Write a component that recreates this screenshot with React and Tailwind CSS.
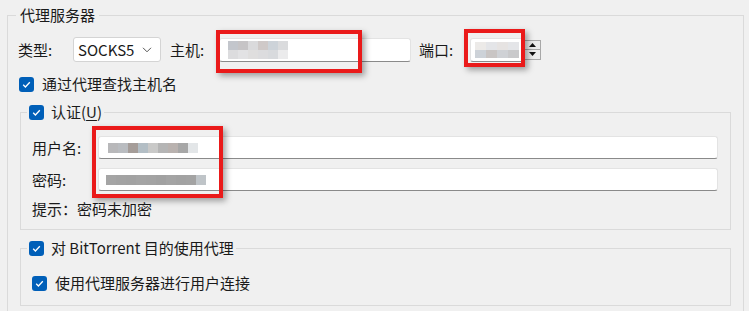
import React from 'react';

// pixelated "redacted" blocks
function Pixels({ rows, cell = 10, h = 9 }) {
  return (
    <div className="flex flex-col">
      {rows.map((row, i) => (
        <div key={i} className="flex">
          {row.map((c, j) => (
            <div key={j} style={{ background: c, width: cell, height: h }} />
          ))}
        </div>
      ))}
    </div>
  );
}

function CheckBox() {
  return (
    <span className="flex h-[15px] w-[15px] shrink-0 items-center justify-center rounded-[3px] bg-[#005fb8]">
      <svg width="11" height="11" viewBox="0 0 11 11">
        <polyline points="2.2,5.8 4.4,8 8.8,3.2" fill="none" stroke="white" strokeWidth="1.3" />
      </svg>
    </span>
  );
}

function TextBox({ className = '', children }) {
  return (
    <div
      className={`flex items-center rounded-[3px] border border-[#e3e3e3] border-b-[#8a8a8a] bg-white ${className}`}
    >
      {children}
    </div>
  );
}

function RedBox({ className }) {
  return (
    <div
      className={`pointer-events-none absolute border-4 border-[#ea1a1a] shadow-[3px_3px_6px_rgba(0,0,0,0.35)] ${className}`}
    />
  );
}

export default function App() {
  return (
    <div className="relative h-[311px] w-[749px] overflow-hidden bg-[#f0f0f0] pl-[7px] font-['Noto_Sans_CJK_SC','Noto_Sans',sans-serif] text-[15px] text-[#1a1a1a]">
      <fieldset className="mt-[5px] w-[737px] border border-[#dadada] px-[8px] pb-[20px]">
        <legend className="px-[4px] leading-[20px]">代理服务器</legend>

        {/* 类型 / 主机 / 端口 */}
        <div className="mt-[12px] flex h-[25px] items-center pl-[2px]">
          <span className="w-[55px] leading-[20px]">类型:</span>
          <div className="flex h-[25px] w-[88px] items-center justify-between rounded-[3px] border border-[#d4d4d4] bg-white pl-[4px] pr-[8px]">
            <span className="leading-[20px]">SOCKS5</span>
            <svg width="10" height="6" viewBox="0 0 10 6">
              <polyline points="1,0.8 5,4.8 9,0.8" fill="none" stroke="#555" strokeWidth="1" />
            </svg>
          </div>
          <span className="ml-[9px] w-[49px] leading-[20px]">主机:</span>
          <TextBox className="h-[24px] w-[192px] pl-[8px]">
            <Pixels
              h={9}
              rows={[
                ['#c3c6cc', '#c6c4c6', '#dadadc', '#cfc9c8', '#cdd3d9', '#dadbdd'],
                ['#dcdcde', '#e2e2e4', '#dfdede', '#dcdcde', '#d8dadd', '#ebebec'],
              ]}
            />
          </TextBox>
          <span className="ml-[8px] w-[51px] leading-[20px]">端口:</span>
          <TextBox className="h-[24px] w-[54px] pl-[4px]">
            <Pixels
              cell={11}
              h={8}
              rows={[
                ['#eceae8', '#e4e5e8', '#e6e3e2', '#e4e5e8'],
                ['#cdd2d8', '#c9c5c4', '#cfd1d5', '#c9c9cb'],
              ]}
            />
          </TextBox>
          <div className="flex h-[20px] w-[17px] flex-col border border-[#a8a8a8] bg-[#ececec]">
            <div className="flex flex-1 items-center justify-center border-b border-[#a8a8a8]">
              <svg width="7" height="4" viewBox="0 0 7 4"><polygon points="0,4 3.5,0 7,4" fill="#111" /></svg>
            </div>
            <div className="flex flex-1 items-center justify-center">
              <svg width="7" height="4" viewBox="0 0 7 4"><polygon points="0,0 3.5,4 7,0" fill="#111" /></svg>
            </div>
          </div>
        </div>

        {/* 通过代理查找主机名 */}
        <div className="mt-[12px] flex h-[20px] items-center gap-[8px] pl-[3px]">
          <CheckBox />
          <span className="leading-[20px]">通过代理查找主机名</span>
        </div>

        {/* 认证 */}
        <fieldset className="mx-[4px] mt-[8px] border border-[#dadada] pb-[10px] pl-[11px] pr-[12px]">
          <legend className="ml-[-5px] flex items-center gap-[7px] px-[2px] leading-[20px]">
            <CheckBox />
            <span>
              认证(<span className="underline underline-offset-2">U</span>)
            </span>
          </legend>
          <div className="mt-[14px] flex h-[23px] items-center">
            <span className="w-[66px] leading-[20px]">用户名:</span>
            <TextBox className="h-[23px] flex-1 pl-[9px]">
              <Pixels
                h={10}
                rows={[
                  ['#b8b8ba', '#b9bcc0', '#a59d99', '#b3bec5', '#c9c9c8', '#b5b5b5', '#b9b2af', '#a7a7a7', '#e3e6e8'],
                ]}
              />
            </TextBox>
          </div>
          <div className="mt-[9px] flex h-[23px] items-center">
            <span className="w-[66px] leading-[20px]">密码:</span>
            <TextBox className="h-[23px] flex-1 pl-[7px]">
              <Pixels
                h={10}
                rows={[
                  ['#a5a5a5', '#a3a3a3', '#a2a2a2', '#a4a4a4', '#a3a3a3', '#a1a1a1', '#a4a4a4', '#a2a2a2', '#a3a3a3', '#bfc4c8'],
                ]}
              />
            </TextBox>
          </div>
          <div className="mt-[8px] leading-[20px]">提示：密码未加密</div>
        </fieldset>

        {/* BitTorrent */}
        <fieldset className="mx-[4px] mt-[8px] border border-[#dadada] pb-[12px] pl-[11px] pr-[12px]">
          <legend className="ml-[-5px] flex items-center gap-[7px] px-[2px] leading-[20px]">
            <CheckBox />
            <span>对 BitTorrent 目的使用代理</span>
          </legend>
          <div className="mt-[15px] flex h-[20px] items-center gap-[8px]">
            <CheckBox />
            <span className="leading-[20px]">使用代理服务器进行用户连接</span>
          </div>
        </fieldset>
      </fieldset>

      <RedBox className="left-[216px] top-[30px] h-[43px] w-[146px]" />
      <RedBox className="left-[464px] top-[29px] h-[38px] w-[61px]" />
      <RedBox className="left-[92px] top-[126px] h-[72px] w-[131px]" />
    </div>
  );
}
